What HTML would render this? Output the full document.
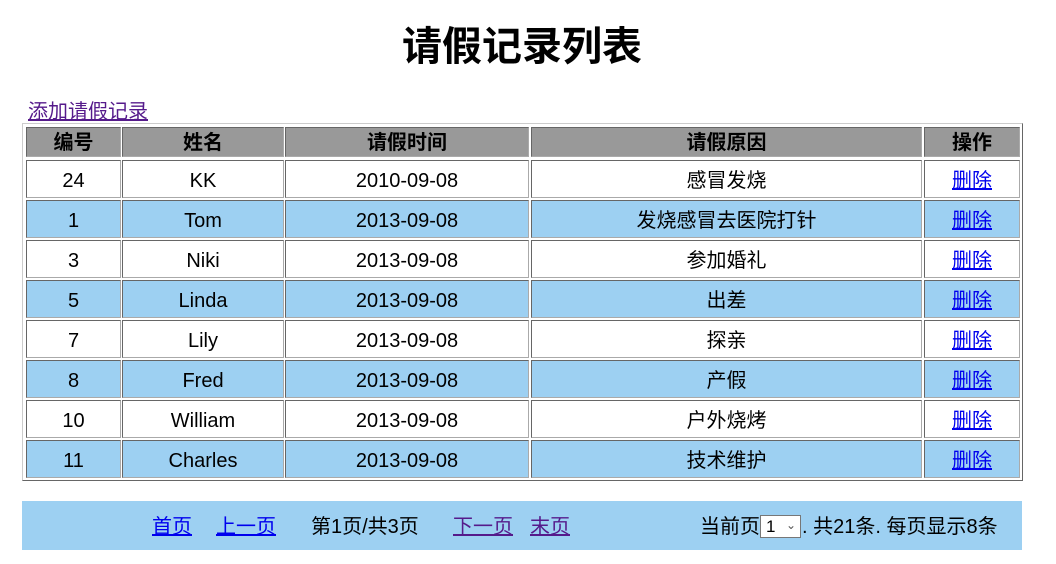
<!DOCTYPE html>
<html><head><meta charset="utf-8"><style>
body{margin:0;width:1056px;height:564px;position:relative;background:#fff;font-family:"Liberation Sans","Noto Sans CJK SC",sans-serif;font-size:20px;color:#000;overflow:hidden}
.a{position:absolute}
h1{position:absolute;left:0;width:1044px;top:22px;margin:0;text-align:center;font-size:40px;line-height:50px;font-weight:bold}
.c{position:absolute;box-sizing:border-box;border:1px solid;border-color:#666 #aaa #aaa #666;text-align:center;line-height:36px;padding-top:2px}
.h{background:#999;font-weight:bold;line-height:28px;padding-top:1px}
.b{background:#9dd0f2}
a{color:#00e}
a.v{color:#551a8b}
</style></head><body>
<h1>请假记录列表</h1>
<a class="a v" style="left:28px;top:99px;line-height:26px" href="#">添加请假记录</a>
<div class="a" style="left:22px;top:123px;width:1001px;height:358px;box-sizing:border-box;border:1px solid;border-color:#ccc #666 #666 #ccc"></div>
<div id="t"></div>
<div class="a" style="left:22px;top:501px;width:1000px;height:49px;background:#9dd0f2"></div>
<a class="a" style="left:152px;top:514px;line-height:26px" href="#">首页</a>
<a class="a" style="left:216px;top:514px;line-height:26px" href="#">上一页</a>
<span class="a" style="left:311px;top:514px;line-height:26px">第1页/共3页</span>
<a class="a v" style="left:453px;top:514px;line-height:26px" href="#">下一页</a>
<a class="a v" style="left:530px;top:514px;line-height:26px" href="#">末页</a>
<span class="a" style="left:700px;top:514px;line-height:26px">当前页</span>
<div class="a" style="left:760px;top:515px;width:41px;height:23px;box-sizing:border-box;border:1px solid #777;background:#fff;font-size:17px;line-height:21px;padding-left:5px">1<span style="position:absolute;left:25px;top:-1px;font-size:12px;color:#555">&#8964;</span></div>
<span class="a" style="left:802px;top:514px;line-height:26px">. 共21条. 每页显示8条</span>
<script>
var cols=[[26,121],[122,284],[285,529],[531,922],[924,1020]];
var hd=["编号","姓名","请假时间","请假原因","操作"];
var rows=[["24","KK","2010-09-08","感冒发烧"],["1","Tom","2013-09-08","发烧感冒去医院打针"],["3","Niki","2013-09-08","参加婚礼"],["5","Linda","2013-09-08","出差"],["7","Lily","2013-09-08","探亲"],["8","Fred","2013-09-08","产假"],["10","William","2013-09-08","户外烧烤"],["11","Charles","2013-09-08","技术维护"]];
var h="";
cols.forEach(function(c,i){h+='<div class="c h" style="left:'+c[0]+'px;top:127px;width:'+(c[1]-c[0])+'px;height:30px">'+hd[i]+'</div>';});
rows.forEach(function(r,j){var y=160+40*j;var cl=j%2?' b':'';
cols.forEach(function(c,i){var t=i<4?r[i]:'<a href="#">删除</a>';
h+='<div class="c'+cl+'" style="left:'+c[0]+'px;top:'+y+'px;width:'+(c[1]-c[0])+'px;height:38px">'+t+'</div>';});});
document.getElementById("t").innerHTML=h;
</script>
</body></html>
